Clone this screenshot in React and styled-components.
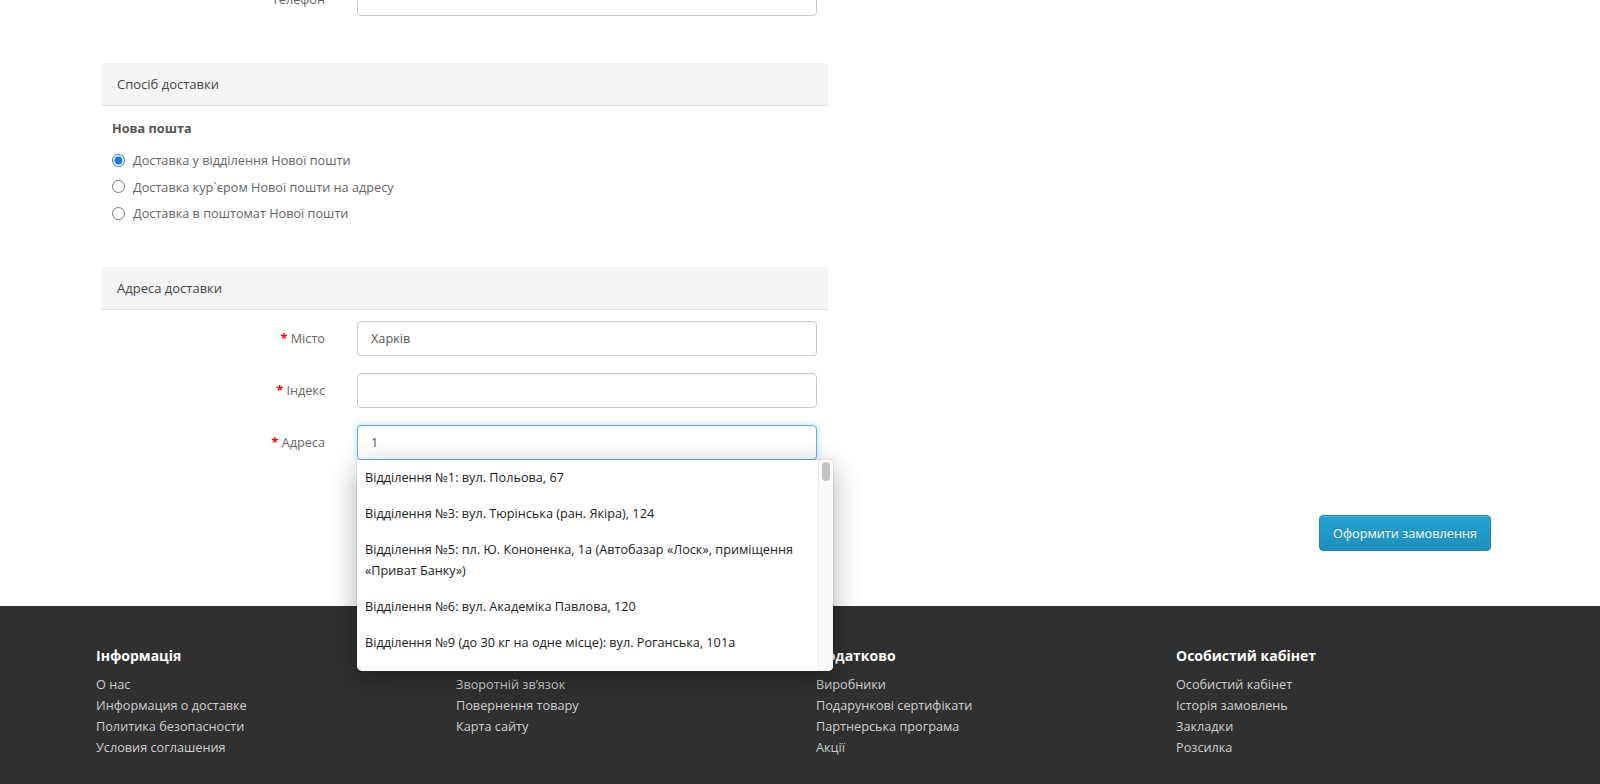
import React from 'react';
import styled, {createGlobalStyle} from 'styled-components';

const GlobalStyle = createGlobalStyle`
  body {
    margin: 0;
    background: #fff;
    font-family: "Open Sans", "Noto Sans", sans-serif;
    font-size: 12.7px;
    color: #666;
    overflow: hidden;
  }
`;

const Page = styled.div`
  display: flex;
  flex-direction: column;
`;

// page is scrolled: the phone field sits partly above the viewport
const Main = styled.main`
  margin-top: -19px;
  padding-left: 101px;
  display: flex;
  flex-direction: column;
`;

const FormColumn = styled.div`
  width: 727px;
  display: flex;
  flex-direction: column;
`;

const FormRow = styled.div`
  display: grid;
  grid-template-columns: 224px 460px;
  column-gap: 32px;
  align-items: center;
  margin-bottom: ${p => (p.$last ? '0' : '17px')};
`;

const Label = styled.label`
  text-align: right;
  color: #666;
  &::before {
    content: ${p => (p.$required ? "'* '" : "''")};
    color: #f00;
    font-weight: 700;
  }
`;

const Field = styled.div`
  position: relative;
`;

const Input = styled.input`
  box-sizing: border-box;
  width: 100%;
  height: 35px;
  padding: 0 13px;
  font-family: inherit;
  font-size: 12.7px;
  color: #555;
  background: #fff;
  border: 1px solid ${p => (p.$focused ? '#66afe9' : '#ccc')};
  border-radius: 4px;
  box-shadow: ${p => (p.$focused
    ? 'inset 0 1px 1px rgba(0,0,0,.075), 0 0 6px rgba(102,175,233,.5)'
    : 'inset 0 1px 1px rgba(0,0,0,.05)')};
  outline: none;
`;

const PanelHeading = styled.div`
  margin-top: ${p => p.$top}px;
  height: 42px;
  line-height: 42px;
  padding: 0 16px;
  background: #f5f5f5;
  border-bottom: 1px solid #e2e2e2;
  border-radius: 3px 3px 0 0;
  color: #444;
  font-size: 13px;
`;

const ProviderTitle = styled.div`
  margin: 12px 0 0 11px;
  line-height: 20px;
  font-weight: 700;
  color: #555;
`;

const RadioList = styled.div`
  margin: 9px 0 40px 11px;
  display: flex;
  flex-direction: column;
`;

const RadioRow = styled.label`
  height: 26.5px;
  display: flex;
  align-items: center;
  gap: 8px;
  color: #666;
  input {
    margin: 0;
    width: 13px;
    height: 13px;
    accent-color: #1a73e8;
  }
`;

const Fields = styled.div`
  margin-top: 11px;
  display: flex;
  flex-direction: column;
`;

const Dropdown = styled.div`
  position: absolute;
  top: 100%;
  left: 0;
  z-index: 10;
  width: 476px;
  height: 211px;
  display: flex;
  background: #fff;
  border-radius: 0 0 5px 5px;
  box-shadow: 0 8px 28px rgba(0, 0, 0, 0.32), 0 0 0 1px rgba(0, 0, 0, 0.06);
  overflow: hidden;
`;

const OptionList = styled.ul`
  flex: 1;
  margin: 0;
  padding: 0;
  list-style: none;
  overflow: hidden;
`;

const Option = styled.li`
  padding: 7.5px 8px;
  line-height: 21px;
  color: #222;
`;

const ScrollTrack = styled.div`
  width: 15px;
  background: #fafafa;
  border-left: 1px solid #ececec;
  padding: 2px 0 0 3px;
  box-sizing: border-box;
`;

const ScrollThumb = styled.div`
  width: 8px;
  height: 19px;
  border-radius: 4px;
  background: #c3c3c3;
`;

const Actions = styled.div`
  margin-top: 55px;
  display: flex;
  justify-content: flex-end;
  padding-right: 109px;
`;

const PrimaryButton = styled.button`
  height: 36px;
  padding: 0 13px;
  font-family: inherit;
  font-size: 12.7px;
  color: #fff;
  background: linear-gradient(to bottom, #25a3d3, #1e8fbb);
  border: 1px solid #1c87b2;
  border-radius: 4px;
  box-shadow: inset 0 1px 0 rgba(255,255,255,.2), 0 1px 2px rgba(0,0,0,.05);
  text-shadow: 0 -1px 0 rgba(0,0,0,.2);
`;

const Footer = styled.footer`
  margin-top: 55px;
  background: #303030;
  padding: 40px 0 60px 96px;
  display: grid;
  grid-template-columns: repeat(4, 360px);
`;

const FooterColumn = styled.div`
  display: flex;
  flex-direction: column;
`;

const FooterTitle = styled.h5`
  margin: 0 0 8.5px;
  line-height: 20px;
  font-size: 14px;
  font-weight: 700;
  color: #fff;
`;

const FooterLink = styled.a`
  line-height: 21px;
  color: #cfcfcf;
  text-decoration: none;
`;

const deliveryOptions = [
  'Доставка у відділення Нової пошти',
  'Доставка кур`єром Нової пошти на адресу',
  'Доставка в поштомат Нової пошти',
];

const branches = [
  'Відділення №1: вул. Польова, 67',
  'Відділення №3: вул. Тюрінська (ран. Якіра), 124',
  'Відділення №5: пл. Ю. Кононенка, 1а (Автобазар «Лоск», приміщення «Приват Банку»)',
  'Відділення №6: вул. Академіка Павлова, 120',
  'Відділення №9 (до 30 кг на одне місце): вул. Роганська, 101а',
  'Відділення №10: вул. Пушкінська, 79',
];

const footerColumns = [
  {title: 'Інформація', links: ['О нас', 'Информация о доставке', 'Политика безопасности', 'Условия соглашения']},
  {title: 'Служба підтримки', links: ['Зворотній зв’язок', 'Повернення товару', 'Карта сайту']},
  {title: 'Додатково', links: ['Виробники', 'Подарункові сертифікати', 'Партнерська програма', 'Акції']},
  {title: 'Особистий кабінет', links: ['Особистий кабінет', 'Історія замовлень', 'Закладки', 'Розсилка']},
];

export default function App() {
  return (
    <Page>
      <GlobalStyle />
      <Main>
        <FormColumn>
          <FormRow $last>
            <Label>Телефон</Label>
            <Field><Input type="text" defaultValue="" /></Field>
          </FormRow>

          <PanelHeading $top={47}>Спосіб доставки</PanelHeading>
          <ProviderTitle>Нова пошта</ProviderTitle>
          <RadioList>
            {deliveryOptions.map((opt, i) => (
              <RadioRow key={opt}>
                <input type="radio" name="shipping" defaultChecked={i === 0} />
                {opt}
              </RadioRow>
            ))}
          </RadioList>

          <PanelHeading $top={0}>Адреса доставки</PanelHeading>
          <Fields>
            <FormRow>
              <Label $required>Місто</Label>
              <Field><Input type="text" defaultValue="Харків" /></Field>
            </FormRow>
            <FormRow>
              <Label $required>Індекс</Label>
              <Field><Input type="text" defaultValue="" /></Field>
            </FormRow>
            <FormRow $last>
              <Label $required>Адреса</Label>
              <Field>
                <Input type="text" defaultValue="1" $focused />
                <Dropdown>
                  <OptionList>
                    {branches.map(b => <Option key={b}>{b}</Option>)}
                  </OptionList>
                  <ScrollTrack><ScrollThumb /></ScrollTrack>
                </Dropdown>
              </Field>
            </FormRow>
          </Fields>
        </FormColumn>

        <Actions>
          <PrimaryButton>Оформити замовлення</PrimaryButton>
        </Actions>
      </Main>

      <Footer>
        {footerColumns.map(col => (
          <FooterColumn key={col.title}>
            <FooterTitle>{col.title}</FooterTitle>
            {col.links.map(l => <FooterLink key={l} href="#">{l}</FooterLink>)}
          </FooterColumn>
        ))}
      </Footer>
    </Page>
  );
}
